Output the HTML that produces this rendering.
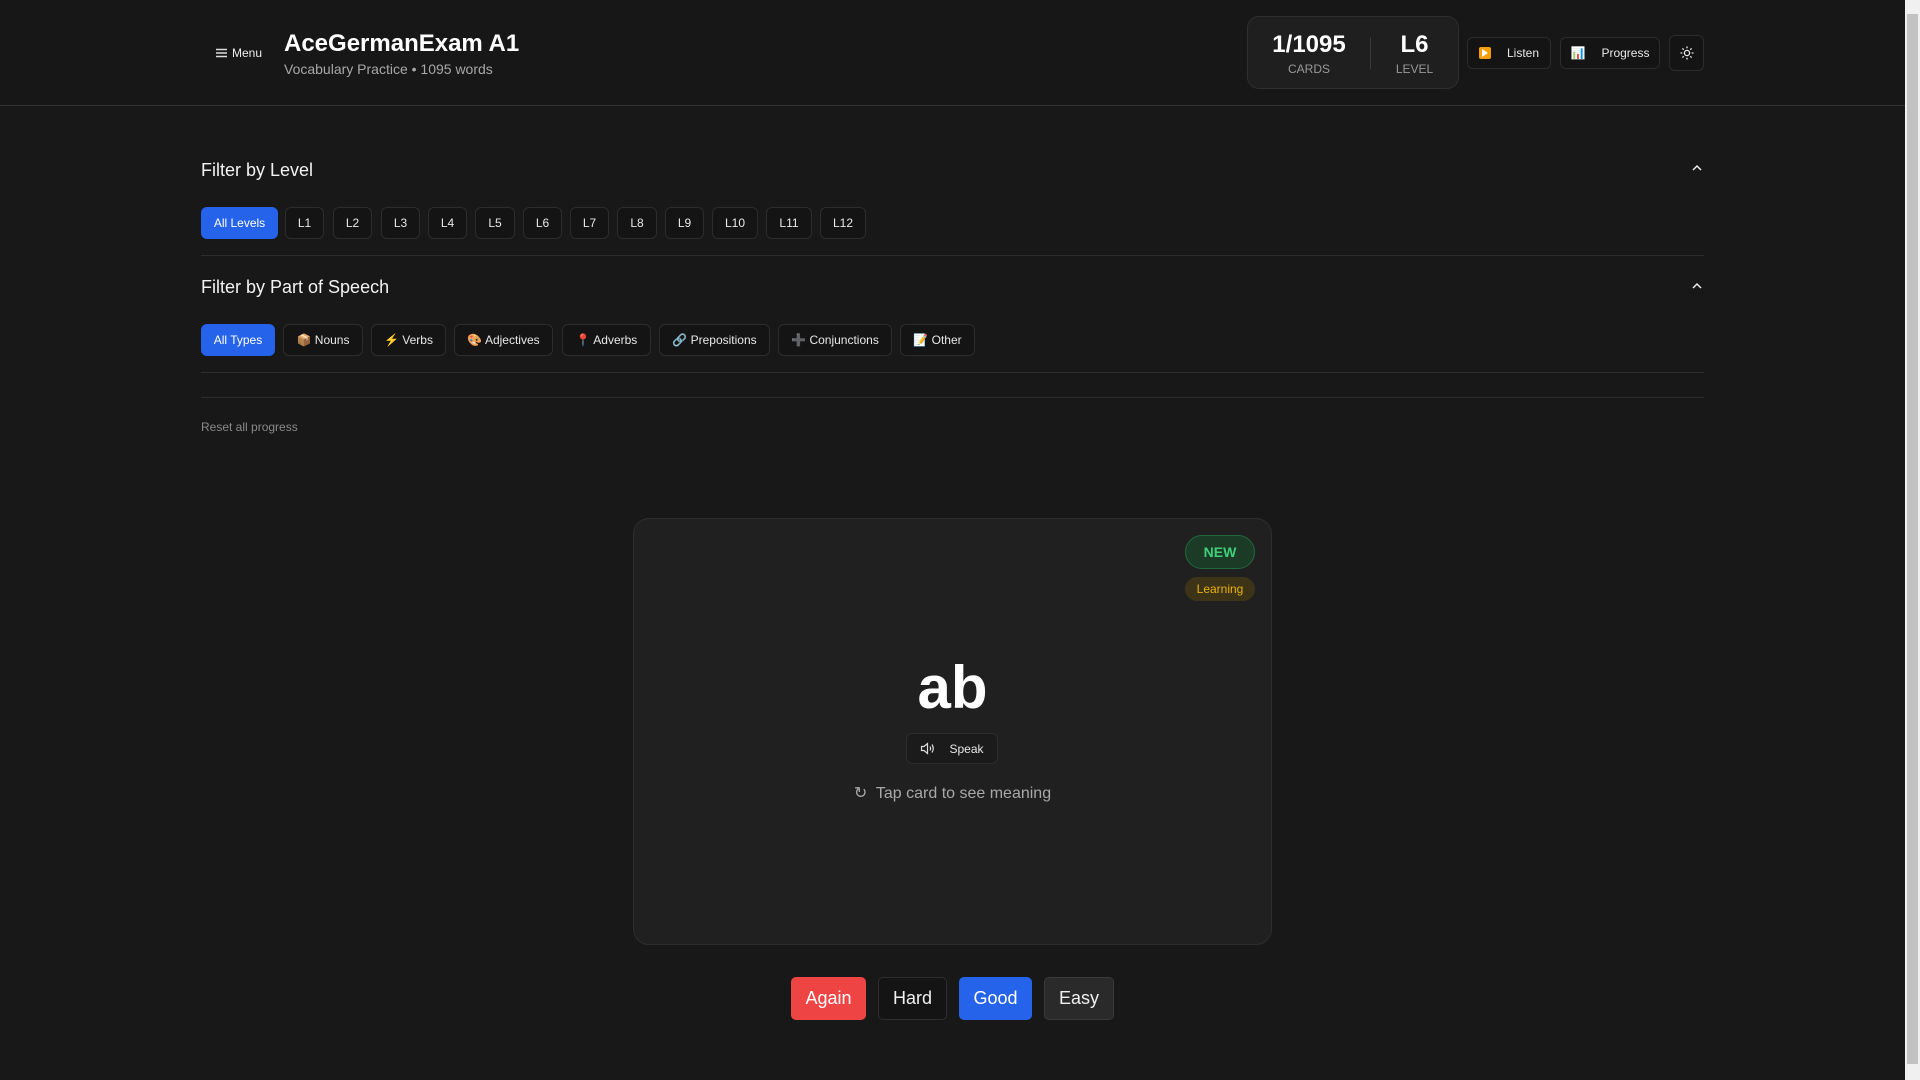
<!DOCTYPE html>
<html><head><meta charset="utf-8"><style>
*{box-sizing:border-box;margin:0;padding:0}
body{width:1920px;height:1080px;overflow:hidden;background:#181818;color:#f2f2f2;font-family:"Liberation Sans",sans-serif;position:relative}
.a{position:absolute}
.hdr{left:0;top:0;width:1905px;height:106px;border-bottom:1px solid #333;background:#171717}
.chip{position:absolute;height:32px;border:1px solid #2c2c2c;border-radius:6px;background:#141414;color:#e8e8e8;font-size:12px;display:flex;align-items:center;justify-content:center;white-space:nowrap}
.blue{background:#2563eb;border-color:#2563eb;color:#fff}
.hr{position:absolute;left:201px;width:1503px;height:1px;background:#2e2e2e}
.btn{position:absolute;top:977px;height:43px;border-radius:5px;font-size:18px;display:flex;align-items:center;justify-content:center;border:1px solid #2e2e2e}
</style></head><body>
<div class="a hdr"></div>
<div class="a" style="left:215px;top:46px;font-size:12px;color:#eee;display:flex;align-items:center;gap:4px">
<svg width="13" height="12" viewBox="0 0 13 12"><path d="M1 2.5h11M1 6h11M1 9.5h11" stroke="#ddd" stroke-width="1.5"/></svg>Menu</div>
<div class="a" style="left:284px;top:30px;font-size:24px;font-weight:bold;color:#fff">AceGermanExam A1</div>
<div class="a" style="left:284px;top:61px;font-size:14px;color:#a8a8a8">Vocabulary Practice • 1095 words</div>
<div class="a" style="left:1247px;top:16px;width:212px;height:73px;border:1px solid #2e2e2e;border-radius:12px;background:#1f1f1f"></div>
<div class="a" style="left:1370px;top:37px;width:1px;height:32px;background:#3a3a3a"></div>
<div class="a" style="left:1249px;top:31px;width:120px;text-align:center;font-size:24px;font-weight:bold;color:#fff">1/1095</div>
<div class="a" style="left:1249px;top:62px;width:120px;text-align:center;font-size:12px;color:#999">CARDS</div>
<div class="a" style="left:1372px;top:31px;width:85px;text-align:center;font-size:24px;font-weight:bold;color:#fff">L6</div>
<div class="a" style="left:1372px;top:62px;width:85px;text-align:center;font-size:12px;color:#999">LEVEL</div>
<div class="chip" style="left:1467px;top:37px;width:84px;height:32px;gap:16px"><span style="width:12px;height:12px;background:#f59e0b;display:inline-block;position:relative;border-radius:2px"><span style="position:absolute;left:3px;top:2px;border-left:6px solid #fff;border-top:4px solid transparent;border-bottom:4px solid transparent"></span></span>Listen</div>
<div class="chip" style="left:1560px;top:37px;width:100px;height:32px;gap:16px"><span style="font-size:12px">📊</span>Progress</div>
<div class="chip" style="left:1669px;top:35px;width:35px;height:36px">
<svg width="14" height="14" viewBox="0 0 14 14" fill="none" stroke="#eee" stroke-width="1.3"><circle cx="7" cy="7" r="2.6"/><path d="M7 0.5v1.8M7 11.7v1.8M0.5 7h1.8M11.7 7h1.8M2.4 2.4l1.3 1.3M10.3 10.3l1.3 1.3M2.4 11.6l1.3-1.3M10.3 3.7l1.3-1.3"/></svg></div>
<div class="a" style="left:1905px;top:0;width:15px;height:1080px;background:#f0f0f0"></div>
<div class="a" style="left:1907px;top:14px;width:11px;height:1050px;background:#c2c2c2"></div>

<div class="a" style="left:201px;top:160px;font-size:18px;color:#f2f2f2">Filter by Level</div>
<svg class="a" style="left:1691px;top:164px" width="12" height="8" viewBox="0 0 12 8"><path d="M2 6l4-4 4 4" stroke="#eee" stroke-width="1.5" fill="none"/></svg>
<div class="chip blue" style="left:201px;top:207px;width:77px">All Levels</div>
<div class="chip" style="left:285px;top:207px;width:39px">L1</div>
<div class="chip" style="left:333px;top:207px;width:39px">L2</div>
<div class="chip" style="left:381px;top:207px;width:39px">L3</div>
<div class="chip" style="left:428px;top:207px;width:39px">L4</div>
<div class="chip" style="left:475px;top:207px;width:40px">L5</div>
<div class="chip" style="left:523px;top:207px;width:39px">L6</div>
<div class="chip" style="left:570px;top:207px;width:39px">L7</div>
<div class="chip" style="left:617px;top:207px;width:40px">L8</div>
<div class="chip" style="left:665px;top:207px;width:39px">L9</div>
<div class="chip" style="left:712px;top:207px;width:46px">L10</div>
<div class="chip" style="left:766px;top:207px;width:46px">L11</div>
<div class="chip" style="left:820px;top:207px;width:46px">L12</div>
<div class="hr" style="top:255px"></div>
<div class="a" style="left:201px;top:277px;font-size:18px;color:#f2f2f2">Filter by Part of Speech</div>
<svg class="a" style="left:1691px;top:282px" width="12" height="8" viewBox="0 0 12 8"><path d="M2 6l4-4 4 4" stroke="#eee" stroke-width="1.5" fill="none"/></svg>
<div class="chip blue" style="left:201px;top:324px;width:74px">All Types</div>
<div class="chip" style="left:283px;top:324px;width:80px">📦 Nouns</div>
<div class="chip" style="left:371px;top:324px;width:75px">⚡ Verbs</div>
<div class="chip" style="left:454px;top:324px;width:99px">🎨 Adjectives</div>
<div class="chip" style="left:562px;top:324px;width:89px">📍 Adverbs</div>
<div class="chip" style="left:659px;top:324px;width:111px">🔗 Prepositions</div>
<div class="chip" style="left:778px;top:324px;width:114px">➕ Conjunctions</div>
<div class="chip" style="left:900px;top:324px;width:75px">📝 Other</div>
<div class="hr" style="top:372px"></div>
<div class="hr" style="top:397px"></div>
<div class="a" style="left:201px;top:420px;font-size:12px;color:#8a8a8a">Reset all progress</div>

<div class="a" style="left:633px;top:518px;width:639px;height:427px;background:#202020;border:1px solid #2e2e2e;border-radius:16px"></div>
<div class="a" style="left:1185px;top:535px;width:70px;height:34px;border-radius:17px;background:#1c3b27;border:1px solid #1f6b3a;color:#3fd07a;font-weight:bold;font-size:14px;display:flex;align-items:center;justify-content:center">NEW</div>
<div class="a" style="left:1185px;top:577px;width:70px;height:24px;border-radius:12px;background:#3d3417;color:#eab308;font-size:12px;display:flex;align-items:center;justify-content:center">Learning</div>
<div class="a" style="left:633px;top:650px;width:639px;text-align:center;font-size:60px;font-weight:bold;color:#fff;line-height:76px">ab</div>
<div class="chip" style="left:906px;top:733px;width:92px;height:31px;background:#1b1b1b;gap:14px">
<svg width="15" height="13" viewBox="0 0 15 13" fill="none" stroke="#ddd" stroke-width="1.2"><path d="M1.5 4.5h2.5l3.5-3v10l-3.5-3H1.5z"/><path d="M10 4.5q1.2 2 0 4M12 2.5q2.5 4 0 8"/></svg>Speak</div>
<div class="a" style="left:633px;top:783px;width:639px;text-align:center;font-size:16px;color:#a8a8a8">↻&nbsp; Tap card to see meaning</div>

<div class="btn" style="left:791px;width:75px;background:#ef4444;border-color:#ef4444;color:#fff">Again</div>
<div class="btn" style="left:878px;width:69px;background:#141414;color:#f0f0f0">Hard</div>
<div class="btn" style="left:959px;width:73px;background:#2563eb;border-color:#2563eb;color:#fff">Good</div>
<div class="btn" style="left:1044px;width:70px;background:#2a2a2a;border-color:#3a3a3a;color:#f0f0f0">Easy</div>
</body></html>
